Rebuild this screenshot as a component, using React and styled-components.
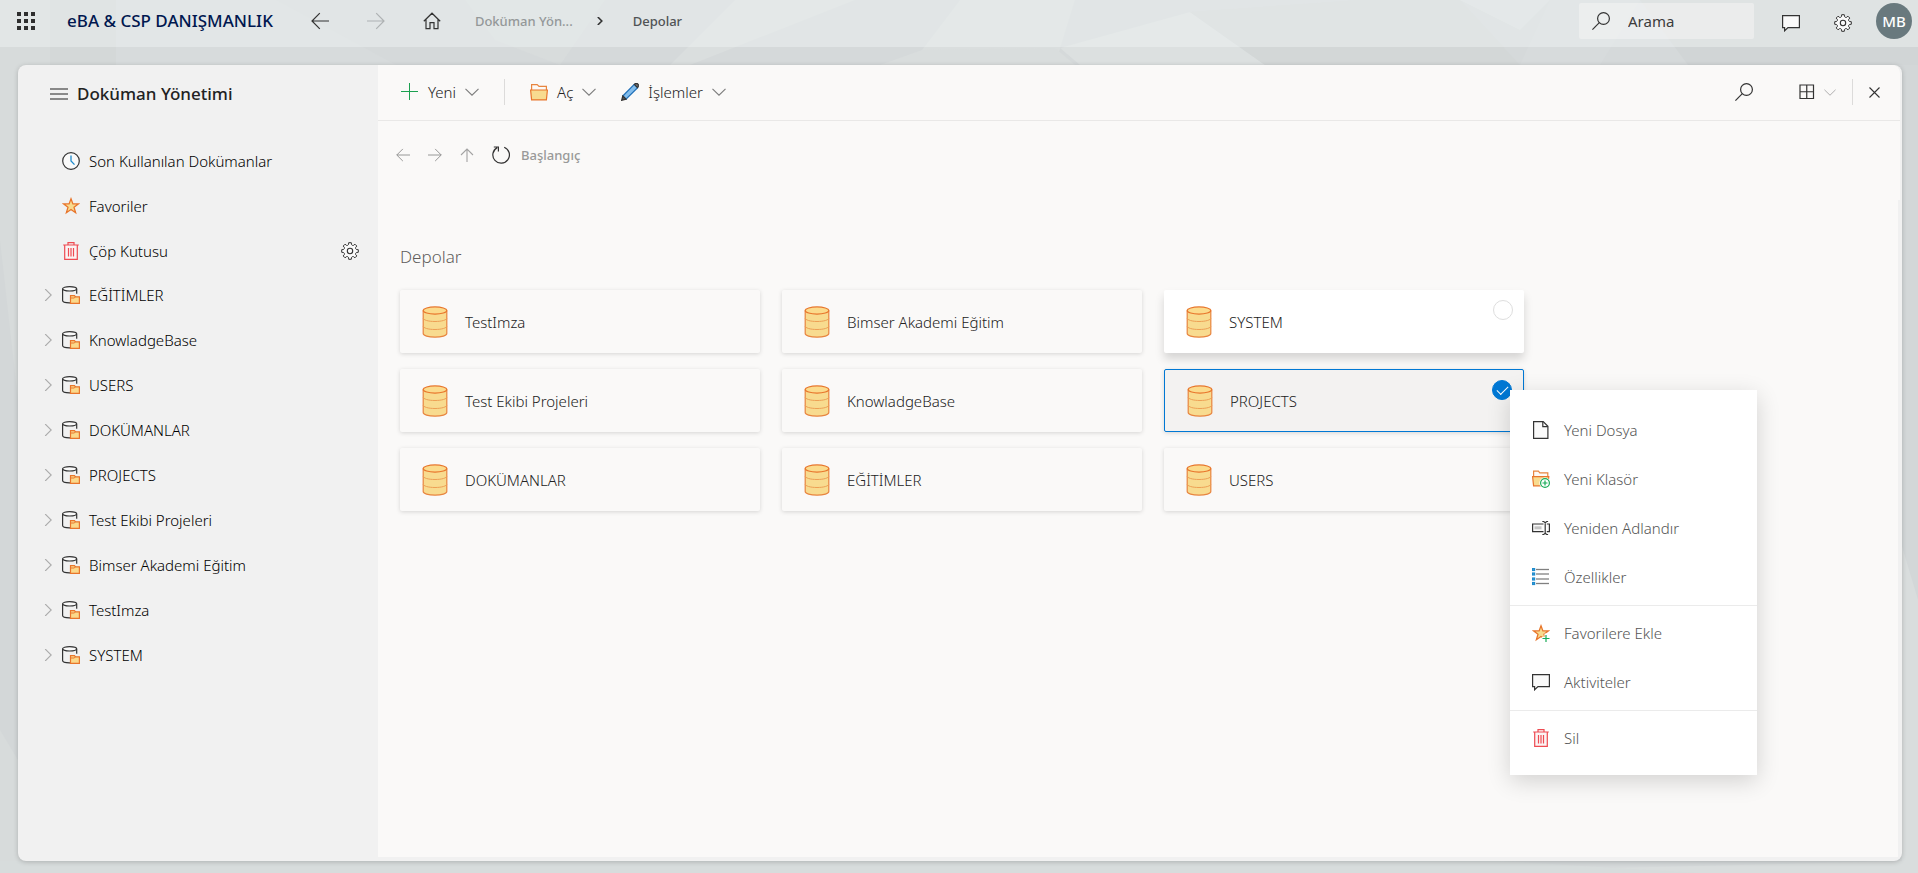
import { useState } from 'react';
import styled, { createGlobalStyle, css } from 'styled-components';

const GlobalStyle = createGlobalStyle`
  * {
    box-sizing: border-box;
  }

  body {
    margin: 0;
    background: #d5d9da;
    color: #222;
    font-family: 'Segoe UI', 'Noto Sans', 'Open Sans', sans-serif;
    font-size: 15px;
    line-height: 20px;
  }

  button,
  input {
    font: inherit;
    color: inherit;
  }

  svg {
    display: block;
    flex: none;
  }
`;

const Page = styled.div`
  position: relative;
  display: flex;
  flex-direction: column;
  min-height: 100vh;
`;

const Backdrop = styled.svg`
  position: absolute;
  inset: 0;
  width: 100%;
  height: 100%;
`;

const TopBar = styled.header`
  position: relative;
  display: flex;
  align-items: center;
  height: 47px;
  padding: 0 6px 5px 17px;
  background: rgba(239, 243, 244, 0.45);
`;

const IconButton = styled.button`
  display: flex;
  padding: 0;
  border: none;
  background: none;
  cursor: pointer;
`;

const AppName = styled.h1`
  margin: 0 38px 0 32px;
  font-size: 17px;
  font-weight: 500;
  color: #00174f;
`;

const TopNav = styled.nav`
  display: flex;
  align-items: center;
  gap: 38px;
`;

const Crumbs = styled.div`
  display: flex;
  align-items: center;
  gap: 24px;
  margin-left: 34px;
  font-size: 13px;
  font-weight: 500;
`;

const Crumb = styled.a`
  padding-left: ${({ $current }) => ($current ? '4px' : '0')};
  color: ${({ $current }) => ($current ? '#505355' : '#949899')};
  text-decoration: none;
`;

const TopActions = styled.div`
  display: flex;
  align-items: center;
  margin-left: auto;
`;

const SearchBox = styled.label`
  display: flex;
  align-items: center;
  gap: 18px;
  width: 175px;
  height: 36px;
  padding: 0 13px;
  border-radius: 2px;
  background: rgba(244, 244, 244, 0.55);
`;

const SearchInput = styled.input`
  flex: 1;
  min-width: 0;
  padding: 0;
  border: none;
  outline: none;
  background: none;

  &::placeholder {
    color: #3c3c3c;
    opacity: 1;
  }
`;

const TopIcons = styled.div`
  display: flex;
  gap: 34px;
  margin: 3px 24px 0 28px;
`;

const Avatar = styled.button`
  width: 36px;
  height: 36px;
  padding: 0;
  border: none;
  border-radius: 50%;
  background: #69797e;
  color: #fff;
  font-weight: 500;
`;

const Panel = styled.div`
  position: relative;
  display: flex;
  flex: 1;
  margin: 18px 16px 12px 18px;
  border-radius: 8px;
  background: #f1f1f1;
  box-shadow: 0 1px 5px rgba(0, 0, 0, 0.2);
`;

const Sidebar = styled.aside`
  width: 360px;
  flex: none;
`;

const SidebarHeader = styled.div`
  display: flex;
  align-items: center;
  gap: 9px;
  height: 73px;
  padding: 0 32px 16px;
`;

const SidebarTitle = styled.h2`
  margin: 0;
  font-size: 17px;
  font-weight: 500;
`;

const SideList = styled.ul`
  margin: 0;
  padding: 0;
  list-style: none;

  & + & {
    margin-top: -1px;
  }
`;

const SideRow = styled.li`
  display: flex;
  align-items: center;
  height: 45px;
  padding: 0 19px 0 26px;
`;

const ChevronSlot = styled.span`
  display: flex;
  width: 18px;
`;

const SideLink = styled.a`
  display: flex;
  flex: 1;
  align-items: center;
  gap: 9px;
  color: #000;
  font-weight: 350;
  text-decoration: none;
`;

const Main = styled.main`
  display: flex;
  flex: 1;
  flex-direction: column;
  min-width: 0;
`;

const MainTop = styled.div`
  height: 135px;
  margin-right: 2px;
  border-top-right-radius: 8px;
  background: #faf9f8;
`;

const Toolbar = styled.div`
  display: flex;
  align-items: center;
  gap: 25px;
  height: 56px;
  padding: 0 20px 1px 23px;
  border-bottom: 1px solid #e9e8e7;
`;

const ToolButton = styled.button`
  display: flex;
  align-items: center;
  gap: 9px;
  padding: 0;
  border: none;
  background: none;
  font-weight: 350;
  cursor: pointer;
`;

const Divider = styled.span`
  width: 1px;
  height: 26px;
  background: #dcdbda;
`;

const ToolbarRight = styled.div`
  display: flex;
  align-items: center;
  gap: 16px;
  margin-left: auto;
`;

const SearchSlot = styled.span`
  margin-right: 30px;
`;

const PathBar = styled.div`
  display: flex;
  align-items: center;
  gap: 18px;
  height: 68px;
  padding-left: 18px;
`;

const PathCurrent = styled.a`
  margin-left: -7px;
  color: #999;
  font-size: 13px;
  font-weight: 500;
  text-decoration: none;
`;

const Content = styled.div`
  flex: 1;
  margin: 0 4px 4px 0;
  padding: 45px 22px 22px;
  background: #faf9f8;
`;

const SectionTitle = styled.h3`
  margin: 0 0 21px;
  color: #605e5c;
  font-size: 17px;
  font-weight: 300;
  line-height: 24px;
`;

const CardGrid = styled.div`
  display: grid;
  grid-template-columns: repeat(auto-fill, 360px);
  gap: 16px 22px;
`;

const Card = styled.div`
  position: relative;
  height: 63px;
  border-radius: 2px;
  box-shadow: 0 1px 4px rgba(0, 0, 0, 0.15);

  ${({ $raised }) =>
    $raised &&
    css`
      background: #fff;
      box-shadow: 0 6px 10px rgba(0, 0, 0, 0.15);
    `}

  ${({ $selected }) =>
    $selected &&
    css`
      border: 1px solid #0078d4;
      background: #f3f2f1;
    `}
`;

const CardButton = styled.button`
  display: flex;
  align-items: center;
  gap: 17px;
  width: 100%;
  height: 100%;
  padding: 0 22px;
  border: none;
  background: none;
  font-weight: 350;
  text-align: left;
  cursor: pointer;
`;

const CardCheck = styled.input`
  position: absolute;
  top: 10px;
  right: 11px;
  width: 20px;
  height: 20px;
  margin: 0;
  border: 1px solid #dedede;
  border-radius: 50%;
  appearance: none;
  background: #fff;
  opacity: ${({ $visible }) => ($visible ? 1 : 0)};

  &:checked {
    border-color: #0078d4;
    background: #0078d4;
    opacity: 1;
  }

  &:checked::after {
    content: '';
    display: block;
    width: 10px;
    height: 5px;
    margin: 5px 0 0 4px;
    border-bottom: 1px solid #fff;
    border-left: 1px solid #fff;
    transform: rotate(-45deg);
  }
`;

const ContextMenu = styled.div`
  position: absolute;
  z-index: 2;
  top: 20px;
  left: 345px;
  width: 247px;
  padding: 15px 0 13px;
  background: #fff;
  box-shadow: 0 6px 22px rgba(0, 0, 0, 0.16);
`;

const MenuGroup = styled.div`
  & + & {
    margin-top: 4px;
    padding-top: 2px;
    border-top: 1px solid #ebebeb;
  }
`;

const MenuItem = styled.button`
  display: flex;
  align-items: center;
  gap: 14px;
  width: 100%;
  height: 49px;
  padding: 0 22px;
  border: none;
  background: none;
  color: #555;
  font-weight: 300;
  cursor: pointer;
`;

const Svg = ({ w = 18, h = w, children }) => (
  <svg width={w} height={h} viewBox={`0 0 ${w} ${h}`} fill="none" stroke="#333" strokeWidth="1.2" aria-hidden="true">
    {children}
  </svg>
);

const WaffleIcon = () => (
  <Svg>
    {[0, 7, 14].map((y) => [0, 7, 14].map((x) => (
      <rect key={`${x}-${y}`} x={x} y={y} width="4" height="4" fill="#2e2e2e" stroke="none" />
    )))}
  </Svg>
);

const LeftIcon = ({ size = 18, color = '#333' }) => (
  <svg width={size} height={size} viewBox="0 0 18 18" fill="none" stroke={color} strokeWidth="1.2" aria-hidden="true">
    <path d="M18 9H1M8.8 1.2L1 9l7.8 7.8" />
  </svg>
);

const RightIcon = ({ size = 18, color = '#333' }) => (
  <svg width={size} height={size} viewBox="0 0 18 18" fill="none" stroke={color} strokeWidth="1.2" aria-hidden="true">
    <path d="M0 9h17M9.2 1.2L17 9l-7.8 7.8" />
  </svg>
);

const UpIcon = () => (
  <Svg w={14}>
    <path d="M7 14V1M1 7l6-6 6 6" stroke="#a3a3a3" strokeWidth="1.1" />
  </Svg>
);

const HomeIcon = () => (
  <Svg>
    <path d="M.8 9.2L9 1.2l8.2 8M3 7.5v9.2h4v-6h4v6h4V7.5" />
  </Svg>
);

const ChevronRight = ({ color = '#aaa', size = 10, width = 1.1 }) => (
  <svg width={size} height={size} viewBox="0 0 10 10" fill="none" stroke={color} strokeWidth={width} aria-hidden="true">
    <path d="M1 0l5 5-5 5" />
  </svg>
);

const ChevronDown = ({ w = 14, color = '#7c7c7c' }) => (
  <svg width={w} height={w / 2 + 1} viewBox="0 0 14 8" fill="none" stroke={color} strokeWidth="1.1" aria-hidden="true">
    <path d="M.5.8L7 7.2 13.5.8" />
  </svg>
);

const SearchIcon = () => (
  <Svg>
    <circle cx="11.5" cy="6.5" r="5.9" />
    <path d="M7.3 10.7L.4 17.6" />
  </Svg>
);

const ChatIcon = () => (
  <Svg>
    <path d="M.6 1.6h16.8v12H6l-3.4 3.2v-3.2h-2z" fill="#fafafa" />
  </Svg>
);

// eight-toothed outline, points alternate between tooth tip and root
const gearPath = Array.from({ length: 8 }, (_, i) => {
  const at = (deg, r) => {
    const a = ((i * 45 + deg) * Math.PI) / 180;
    return `${(9 + r * Math.cos(a)).toFixed(2)} ${(9 + r * Math.sin(a)).toFixed(2)}`;
  };
  return `${i ? 'L' : 'M'}${at(-9, 8.4)}L${at(9, 8.4)}L${at(13, 6.6)}Q${at(22.5, 5.7)} ${at(32, 6.6)}`;
}).join('');

const GearIcon = () => (
  <Svg>
    <path d={`${gearPath}Z`} fill="#fafafa" strokeWidth="1" strokeLinejoin="round" />
    <circle cx="9" cy="9" r="2.7" strokeWidth="1.1" />
  </Svg>
);

const HamburgerIcon = () => (
  <Svg w={18} h={12}>
    <path d="M0 1h18M0 11h18" stroke="#888" strokeWidth="2" />
    <path d="M0 6h18" stroke="#222" strokeWidth="1" />
  </Svg>
);

const ClockIcon = () => (
  <Svg>
    <circle cx="9" cy="9" r="8.3" fill="#fafafa" />
    <path d="M9 3.5V9l3.5 3.6" stroke="#1e8bcd" strokeWidth="1.3" />
  </Svg>
);

const STAR = 'M9 1.8l1.9 5.1h5.4L12 10.3l1.6 5.4L9 12.5l-4.6 3.2L6 10.3 1.7 6.9h5.4z';

const StarIcon = () => (
  <Svg>
    <path d={STAR} fill="#f8db8f" stroke="#e8762c" strokeWidth="1.3" />
  </Svg>
);

const StarAddIcon = () => (
  <Svg>
    <path d={STAR} fill="#f8db8f" stroke="#e8762c" strokeWidth="1.3" />
    <path d="M14 9.5V18M9.8 14.5H18" stroke="#fff" strokeWidth="3" />
    <path d="M14 11v7M10.5 14.5h7" stroke="#1aab58" />
  </Svg>
);

const TrashIcon = () => (
  <Svg>
    <path d="M2.7 3v14.4h12.6V3" fill="#fbf4f4" stroke="#ee4b52" />
    <path d="M1.2 3h15.6M6 3V.7h6V3M6.5 6v8.6M9 6v8.6M11.5 6v8.6" stroke="#ee4b52" />
  </Svg>
);

const TreeDbIcon = () => (
  <Svg>
    <path d="M.6 2.8v11.8c0 1.3 2.9 2.3 6.8 2.3l1-.1M14.7 2.8v5" />
    <ellipse cx="7.6" cy="2.8" rx="7" ry="2.2" fill="#fafafa" />
    <path d="M8.5 17.4V9.6h4l1 1.2h3.9v6.6z" fill="#fbd98b" stroke="#e8762c" />
    <path d="M8.5 12h3.6l1.4-1.2" stroke="#e8762c" strokeWidth="1" />
  </Svg>
);

const PlusIcon = () => (
  <Svg>
    <path d="M8.5 0v17M0 8.500h17" stroke="#1aa04f" strokeWidth="1" />
  </Svg>
);

const FolderIcon = () => (
  <Svg>
    <path d="M1.6 7.5V1.6h5.6L9 3.4h7.4v4" fill="#fdfaf7" stroke="#e8853f" />
    <path d="M.6 7h16.8l-1 9.9H1.6z" fill="#f8db8f" stroke="#e8762c" />
  </Svg>
);

const FolderAddIcon = () => (
  <Svg>
    <path d="M1.6 7V1.2h4.8l1.4 1.6h8V7" fill="#fdfaf7" stroke="#e8853f" />
    <path d="M.6 6.6h16.2l-1 9.2H1.6z" fill="#f8db8f" stroke="#e8762c" />
    <circle cx="13" cy="13" r="5.6" fill="#fff" stroke="none" />
    <circle cx="13" cy="13" r="4.4" fill="#fff" stroke="#1aab58" />
    <path d="M13 10.5v5M10.5 13h5" stroke="#1aab58" />
  </Svg>
);

const PencilIcon = () => (
  <Svg>
    <path d="M1.8 13L13.3 1.4l3.3 3.3L5 16.2z" fill="#83bdec" stroke="#1e6fb8" />
    <path d="M1.8 13L.7 17.3 5 16.2z" fill="#555" />
    <path d="M13.3 1.4l1-.8h2l1 1v2l-.8 1z" fill="#777" />
  </Svg>
);

const RefreshIcon = () => (
  <Svg>
    <path d="M12.2 1.2a8.3 8.3 0 1 1-7 .4M1.8 1h4.6v4.6" />
  </Svg>
);

const GridIcon = () => (
  <Svg w={16}>
    <path d="M1 1h13.5v13.5H1zM7.75 1v13.5M1 7.75h13.5" />
  </Svg>
);

const CloseIcon = () => (
  <Svg w={11}>
    <path d="M.5.5l10 10M10.5.5l-10 10" strokeWidth="1.1" />
  </Svg>
);

const FileIcon = () => (
  <Svg>
    <path d="M1.6.6h9.6l4.7 4.7v12.1H1.6z" fill="#fafafa" />
    <path d="M10.8.8v4.9h5" />
  </Svg>
);

const RenameIcon = () => (
  <Svg>
    <path d="M11.5 5H.6v7.6h10.9M14.800 5h2.6v7.6h-2.6" fill="#fafafa" />
    <path d="M2.5 8.800h7" stroke="#c4c4c4" strokeWidth="3" />
    <path d="M10.3 2.5h1.4l1.5 1.2 1.5-1.2h1.4M13.2 3.7v10.6M10.3 15.5h1.4l1.5-1.2 1.5 1.2h1.4" />
  </Svg>
);

const PropertiesIcon = () => (
  <Svg>
    {[1.5, 6, 11, 15.5].map((y) => (
      <g key={y}>
        <path d={`M4 ${y}h13`} stroke="#808080" strokeWidth="1.3" />
        <rect x=".6" y={y - 1} width="2" height="2" fill="#cfe6f8" stroke="#1e8bcd" />
      </g>
    ))}
  </Svg>
);

const DatabaseIcon = () => (
  <Svg w={26} h={32}>
    <path d="M1.2 4.5v23c0 2 5 3.7 11.8 3.7s11.8-1.7 11.8-3.7v-23" fill="#f8db8f" stroke="#e8853f" />
    <ellipse cx="13" cy="4.5" rx="11.8" ry="3.6" fill="#fbdb8c" stroke="#e8762c" />
    <path d="M1.2 12c0 2 5 3.5 11.8 3.5S24.8 14 24.8 12M1.2 20c0 2 5 3.5 11.8 3.5S24.8 22 24.8 20" stroke="#eda055" strokeWidth="1" />
  </Svg>
);

const SHORTCUTS = [
  { label: 'Son Kullanılan Dokümanlar', Icon: ClockIcon },
  { label: 'Favoriler', Icon: StarIcon },
  { label: 'Çöp Kutusu', Icon: TrashIcon, settings: true },
];

const TREE = [
  'EĞİTİMLER',
  'KnowladgeBase',
  'USERS',
  'DOKÜMANLAR',
  'PROJECTS',
  'Test Ekibi Projeleri',
  'Bimser Akademi Eğitim',
  'TestImza',
  'SYSTEM',
];

const DEPOTS = [
  'TestImza',
  'Bimser Akademi Eğitim',
  'SYSTEM',
  'Test Ekibi Projeleri',
  'KnowladgeBase',
  'PROJECTS',
  'DOKÜMANLAR',
  'EĞİTİMLER',
  'USERS',
];

const MENU = [
  [
    { label: 'Yeni Dosya', Icon: FileIcon },
    { label: 'Yeni Klasör', Icon: FolderAddIcon },
    { label: 'Yeniden Adlandır', Icon: RenameIcon },
    { label: 'Özellikler', Icon: PropertiesIcon },
  ],
  [
    { label: 'Favorilere Ekle', Icon: StarAddIcon },
    { label: 'Aktiviteler', Icon: ChatIcon },
  ],
  [{ label: 'Sil', Icon: TrashIcon }],
];

const Background = () => (
  <Backdrop viewBox="0 0 1918 873" preserveAspectRatio="none" aria-hidden="true">
    <path d="M0 0h116v873H0z" fill="#d7dbdb" />
    <path d="M50 0h66v65H50z" fill="#d4d8d8" />
    <path d="M116 0h160l120 65H116z" fill="#d7dbdc" />
    <path d="M465 0h140l-45 65-65-25z" fill="#d8dcdc" />
    <path d="M735 0h120l-165 65h-20z" fill="#dadede" />
    <path d="M960 0h115l-20 65-133-15z" fill="#dadede" />
    <path d="M880 65l42-15 133-2 20 17z" fill="#d9dddd" />
    <path d="M1060 48l130-36 75 53h-185z" fill="#dce0e0" />
    <path d="M1190 12l170-12h100l60 65h-255z" fill="#d3d7d7" />
    <path d="M1460 0h90l-30 30z" fill="#dbdfe0" />
    <path d="M1550 0h90l-40 65h-80z" fill="#d7dbdc" />
    <path d="M1640 0h278v65h-230z" fill="#d1d5d6" />
    <path d="M0 240l18 160v360l-18-30z" fill="#d3d7d8" />
    <path d="M1900 65h18v535l-18-60z" fill="#d3d7d8" />
    <path d="M1900 540l18 60v273H1400l502-12z" fill="#d9dddd" />
    <path d="M0 861h1500l200 12H0z" fill="#d7dcdc" />
  </Backdrop>
);

const App = () => {
  const [selected, setSelected] = useState('PROJECTS');

  return (
    <Page>
      <GlobalStyle />
      <Background />
      <TopBar>
        <IconButton aria-label="Uygulamalar"><WaffleIcon /></IconButton>
        <AppName>eBA &amp; CSP DANIŞMANLIK</AppName>
        <TopNav>
          <IconButton aria-label="Geri"><LeftIcon /></IconButton>
          <IconButton aria-label="İleri"><RightIcon color="#aeb2b3" /></IconButton>
          <IconButton aria-label="Ana sayfa"><HomeIcon /></IconButton>
        </TopNav>
        <Crumbs>
          <Crumb href="#dokuman">Doküman Yön...</Crumb>
          <ChevronRight color="#333" size={8} width={2} />
          <Crumb href="#depolar" $current>Depolar</Crumb>
        </Crumbs>
        <TopActions>
          <SearchBox>
            <SearchIcon />
            <SearchInput type="text" placeholder="Arama" aria-label="Arama" />
          </SearchBox>
          <TopIcons>
            <IconButton aria-label="Mesajlar"><ChatIcon /></IconButton>
            <IconButton aria-label="Ayarlar"><GearIcon /></IconButton>
          </TopIcons>
          <Avatar>MB</Avatar>
        </TopActions>
      </TopBar>

      <Panel>
        <Sidebar>
          <SidebarHeader>
            <IconButton aria-label="Menü"><HamburgerIcon /></IconButton>
            <SidebarTitle>Doküman Yönetimi</SidebarTitle>
          </SidebarHeader>
          <SideList>
            {SHORTCUTS.map(({ label, Icon, settings }) => (
              <SideRow key={label}>
                <ChevronSlot />
                <SideLink href="#kisayol"><Icon />{label}</SideLink>
                {settings && <IconButton aria-label="Çöp kutusu ayarları"><GearIcon /></IconButton>}
              </SideRow>
            ))}
          </SideList>
          <SideList>
            {TREE.map((label) => (
              <SideRow key={label}>
                <ChevronSlot><ChevronRight size={12} width={0.9} /></ChevronSlot>
                <SideLink href="#depo"><TreeDbIcon />{label}</SideLink>
              </SideRow>
            ))}
          </SideList>
        </Sidebar>

        <Main>
          <MainTop>
            <Toolbar>
              <ToolButton><PlusIcon />Yeni<ChevronDown /></ToolButton>
              <Divider />
              <ToolButton><FolderIcon />Aç<ChevronDown /></ToolButton>
              <ToolButton><PencilIcon />İşlemler<ChevronDown /></ToolButton>
              <ToolbarRight>
                <SearchSlot>
                  <IconButton aria-label="Ara"><SearchIcon /></IconButton>
                </SearchSlot>
                <ToolButton aria-label="Görünüm"><GridIcon /><ChevronDown w={12} color="#aaa" /></ToolButton>
                <Divider />
                <IconButton aria-label="Kapat"><CloseIcon /></IconButton>
              </ToolbarRight>
            </Toolbar>
            <PathBar>
              <IconButton aria-label="Önceki"><LeftIcon size={14} color="#909090" /></IconButton>
              <IconButton aria-label="Sonraki"><RightIcon size={14} color="#909090" /></IconButton>
              <IconButton aria-label="Üst klasör"><UpIcon /></IconButton>
              <IconButton aria-label="Yenile"><RefreshIcon /></IconButton>
              <PathCurrent href="#baslangic">Başlangıç</PathCurrent>
            </PathBar>
          </MainTop>

          <Content>
            <SectionTitle>Depolar</SectionTitle>
            <CardGrid>
              {DEPOTS.map((name) => (
                <Card key={name} $raised={name === 'SYSTEM'} $selected={name === selected}>
                  <CardButton onClick={() => setSelected(name)}>
                    <DatabaseIcon />
                    {name}
                  </CardButton>
                  <CardCheck
                    type="checkbox"
                    aria-label={name}
                    $visible={name === 'SYSTEM'}
                    checked={name === selected}
                    onChange={() => setSelected(name)}
                  />
                  {name === selected && (
                    <ContextMenu>
                      {MENU.map((group) => (
                        <MenuGroup key={group[0].label}>
                          {group.map(({ label, Icon }) => (
                            <MenuItem key={label}><Icon />{label}</MenuItem>
                          ))}
                        </MenuGroup>
                      ))}
                    </ContextMenu>
                  )}
                </Card>
              ))}
            </CardGrid>
          </Content>
        </Main>
      </Panel>
    </Page>
  );
};

export default App;
